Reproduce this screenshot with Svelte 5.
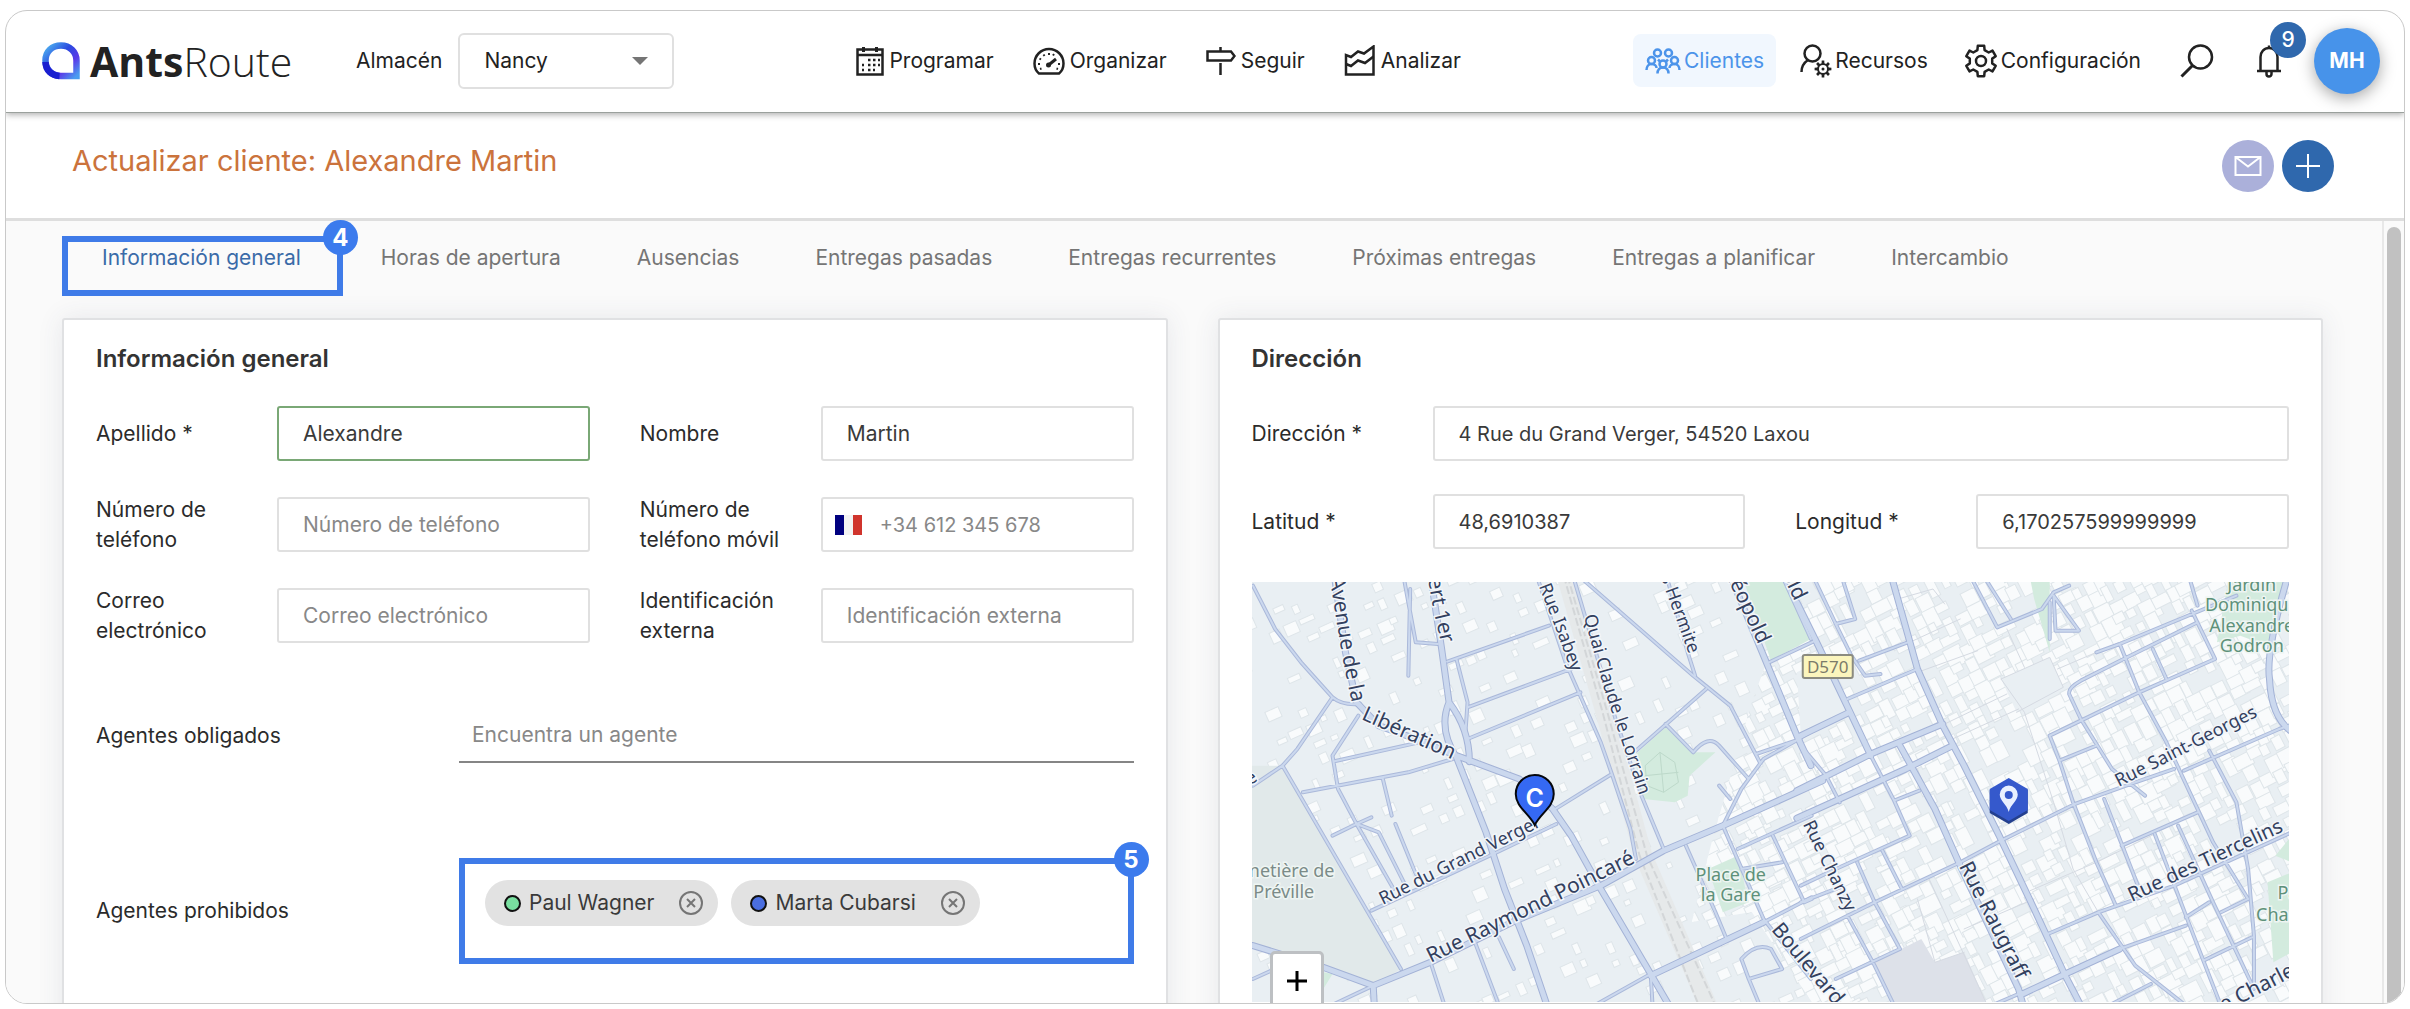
<script>
  const mainNav = [
    { label: 'Programar', icon: 'calendar' },
    { label: 'Organizar', icon: 'gauge' },
    { label: 'Seguir', icon: 'sign' },
    { label: 'Analizar', icon: 'chart' }
  ];
  const sideNav = [
    { label: 'Clientes', icon: 'people', active: true },
    { label: 'Recursos', icon: 'usergear' },
    { label: 'Configuración', icon: 'gear' }
  ];
  const tabs = [
    'Información general',
    'Horas de apertura',
    'Ausencias',
    'Entregas pasadas',
    'Entregas recurrentes',
    'Próximas entregas',
    'Entregas a planificar',
    'Intercambio'
  ];
  const agents = [
    { name: 'Paul Wagner', tone: 'green' },
    { name: 'Marta Cubarsi', tone: 'blue' }
  ];

  const gearPath = (teeth, outer, inner, c) => {
    const pts = [];
    const step = (Math.PI * 2) / teeth;
    for (let i = 0; i < teeth; i++) {
      const a = i * step - Math.PI / 2;
      for (const [r, o] of [[inner, -0.3], [outer, -0.2], [outer, 0.2], [inner, 0.3]]) {
        pts.push(`${(c + r * Math.cos(a + o * step)).toFixed(1)} ${(c + r * Math.sin(a + o * step)).toFixed(1)}`);
      }
    }
    return 'M' + pts.join('L') + 'Z';
  };

  // Building footprints: sparse suburbs to the west, dense blocks to the east.
  let seed = 7;
  const rnd = () => {
    seed = (seed * 16807) % 2147483647;
    return seed / 2147483647;
  };
  const houses = [];
  for (let u = -40; u < 620; u += 17) {
    for (let v = -60; v < 640; v += 17) {
      if (rnd() > 0.38) continue;
      const x = u + rnd() * 8;
      const y = v + rnd() * 8;
      if (x > 540 + y * 0.1) continue;
      houses.push({ x, y, w: 5 + rnd() * 11, h: 5 + rnd() * 8 });
    }
  }
  const blocks = [];
  for (let u = -20; u < 1100; u += 14) {
    for (let v = 0; v < 1000; v += 15) {
      if (rnd() > 0.85) continue;
      blocks.push({ x: u + rnd() * 5, y: v + rnd() * 5, w: 7 + rnd() * 14, h: 8 + rnd() * 13 });
    }
  }

  const westMajor = [
    'M280 20L310 250L340 400L400 470L500 510L610 560L780 630L870 720L920 800L1000 960L1135 1215L1185 1310',
    'M540 20L570 240L590 400Q560 480 610 565',
    'M590 400Q645 480 645 578',
    'M610 565L690 790L740 960L800 1130L855 1310',
    'M60 1130L250 1195L385 1250L540 1180L760 1060L1000 950L1170 845L1330 770L1600 635',
    'M385 1250L388 1310',
    'M1350 20L1440 260L1530 500L1568 590',
    'M1135 1220L1440 1060'
  ];
  const westMinor = [
    'M60 50L120 180L190 280L275 385Q300 410 350 405', 'M275 385L180 540L140 590L60 650',
    'M345 440L275 560L290 660L340 765L440 960', 'M140 590L460 1200', 'M280 577L530 515',
    'M195 670L480 610L600 570', 'M410 625L435 740', 'M340 765L400 790L470 945', 'M445 765L500 915',
    'M275 800L340 765L380 745', 'M585 278L860 170', 'M610 270L640 400L635 480', 'M640 415L920 300',
    'M640 510L945 370', 'M830 30L905 280L1000 520L1030 615L1080 780L1095 870', 'M925 20L1040 450L1110 680L1170 840',
    'M940 20L1250 320L1350 410L1430 580', 'M1180 30L1235 250L1255 320', 'M1285 360L1095 545',
    'M1175 465L1250 550Q1290 495 1320 530L1400 630', 'M1490 20L1568 210', 'M1455 280L1580 215',
    'M1330 770L1380 660L1440 570L1520 520L1580 480', 'M1330 770L1440 1050L1568 1230', 'M1230 830L1310 1030L1340 1110',
    'M1135 1215L990 1305', 'M1135 1215L1140 1310', 'M1135 1215L1180 1310', 'M660 1120L725 1310', 'M540 1180L578 1310',
    'M725 1105L765 1200', 'M1370 840L1570 740', 'M1420 555L1540 510', 'M1465 800L1550 1000L1570 990',
    'M380 1025L700 860L880 765', 'M870 725L1030 615', 'M385 1250L280 1305', 'M1440 1060L1570 985',
    'M1380 1170Q1420 1120 1460 1140L1490 1200L1400 1230Z', 'M1320 650L1350 690', 'M60 1230L110 1205',
    'M1380 900L1490 880', 'M470 40L500 220L560 225', 'M485 60L480 320', 'M1400 1230L1430 1310'
  ];
  const eastMajor = [
    'M-10 100L45 230L125 425L180 560', 'M235 30L300 300L365 470L420 590L510 800L600 1020L680 1220L720 1310',
    'M255 530L345 720L410 890L560 1260L572 1310', 'M-10 665L180 555L365 465', 'M-10 748L100 690L270 600L390 530',
    'M1250 30Q1195 250 1205 330Q1210 450 1265 490', 'M0 500L125 430', 'M570 1275L680 1215L820 1140'
  ];
  const eastMinor = [
    'M0 530L65 620L100 700', 'M0 1110L190 1000L410 880L515 815L705 705L860 640L960 600', 'M985 605L1230 480L1260 468',
    'M765 1030L960 950L1130 860L1262 790', 'M635 1095L765 1030L860 1190L990 1310', 'M820 1140L990 1070',
    'M120 390L300 300', 'M150 275L275 220', 'M35 30L90 165L130 260L165 320L205 315', 'M90 165L140 150L110 40',
    'M440 30L505 175', 'M475 30L540 150', 'M505 175L620 120L650 70L690 50', 'M650 80L715 185L655 185Z', 'M760 250L820 225L1120 80', 'M1000 30L1020 110',
    'M820 225L870 370L940 520L1060 820L1150 990', 'M690 370Q690 355 720 335L830 270L1020 160', 'M690 375L720 450L800 600L885 680',
    'M720 455L870 370L1065 270L1005 125', 'M1050 545L1120 700L1150 900L1165 1100L1165 1260', 'M640 500L665 575L700 700L760 880L810 1010',
    'M640 500L720 455', 'M665 575L760 530', 'M780 690L870 960', 'M825 830L1020 730', 'M910 795L1010 1100L1080 1310',
    'M970 770L1060 1000L1165 1260', 'M1080 1030L1150 990', 'M1035 1175L1160 1105', 'M905 240L940 330', 'M990 1045L1050 1000',
    'M180 560L240 695L280 800', 'M240 695L305 665', 'M280 800L90 900L0 950', 'M210 845L260 960', 'M145 880L190 1000L255 1140',
    'M120 1040L190 1190L240 1310', 'M255 1140L90 1230', 'M0 1000L100 955', 'M800 1305L900 1245', 'M490 1310L570 1270', 'M640 210L640 100'
  ];
  const lanes = [
    'M250 90L340 60L370 105', 'M280 220L410 150', 'M300 310L455 245', 'M515 330L575 430L650 700L700 900L765 1030',
    'M515 330L640 265L675 355L555 430', 'M530 180L575 295', 'M370 465L530 375', 'M390 510L560 420', 'M590 965L760 880L910 795',
    'M300 990L345 1180L420 1150', 'M420 1080L600 990', 'M330 690L300 600', 'M660 300L830 215', 'M330 930L480 1310'
  ];
</script>

{#snippet icon(name)}
  {#if name === 'calendar'}
    <svg class="ico" viewBox="0 0 28 30" width="28" height="30" aria-hidden="true">
      <path d="M1.5 3.5h25v25h-25zM1.5 9h25" /><path d="M7.500 1v5M20.500 1v5" stroke-width="3" />
      <path d="M12 14h2.500M17 14h2.500M22 14h2M6 19h2M12 19h2.500M17 19h2.500M22 19h2M6 24h2M12 24h2.500M17 24h2" stroke-width="2.500" />
    </svg>
  {:else if name === 'gauge'}
    <svg class="ico" viewBox="0 0 32 28" width="32" height="28" aria-hidden="true">
      <path d="M6 26.500C3 24 1.500 20 1.500 16.500a14.500 14.500 0 0 1 29 0c0 3.500-1.500 7.500-4.500 10z" />
      <path d="M15 18.500l8-6.500" stroke-width="3" /><circle cx="15.500" cy="18" r="2.500" fill="currentColor" stroke="none" />
      <path d="M5 17h2M6.500 11.500l1.500 1M10.500 7.500l1 1.500M16 6v2M21 7l-1 1.500M25 17h2M7 22l1.500-.500M25 22l-1.500-.500" stroke-width="2" />
    </svg>
  {:else if name === 'sign'}
    <svg class="ico" viewBox="0 0 30 30" width="30" height="30" aria-hidden="true">
      <path d="M1.500 5.500h23.500l3.500 4.500-3.500 4.500h-23.500z" /><path d="M14.500 1v4M14.500 17v12" />
    </svg>
  {:else if name === 'chart'}
    <svg class="ico" viewBox="0 0 32 32" width="32" height="32" aria-hidden="true">
      <path d="M2 29.500v-19.500l5 2 7-5.500 6 2 9.500-7v28z" /><path d="M2 19l5 2 7-5.500 7 2.500 8.500-6.500" />
    </svg>
  {:else if name === 'people'}
    <svg class="ico" viewBox="0 0 36 26" width="36" height="26" aria-hidden="true">
      <circle cx="12.500" cy="5" r="3.500" /><circle cx="23.500" cy="5" r="3.500" />
      <circle cx="6.500" cy="12.500" r="3.500" /><circle cx="29.500" cy="12.500" r="3.500" /><circle cx="18" cy="16" r="3.500" />
      <path d="M1.500 22c0-3.500 2-6 5-6s5 2 5 4M34.500 22c0-3.500-2-6-5-6s-5 2-5 4M12.500 25.500c0-3.500 2-6 5.500-6s5.500 2.500 5.500 6M13 11.500l2 2M23 11.500l-2 2" />
    </svg>
  {:else if name === 'usergear'}
    <svg class="ico" viewBox="0 0 32 34" width="32" height="34" aria-hidden="true">
      <circle cx="12.500" cy="9.500" r="8" /><path d="M1.500 28c0-5 2-9 6.500-12" />
      <g transform="translate(14 16)"><path d={gearPath(8, 8.5, 6, 9)} fill="currentColor" stroke="none" /><circle cx="9" cy="9" r="4" fill="#fff" stroke="none" /><circle cx="9" cy="9" r="1.500" fill="currentColor" stroke="none" /></g>
    </svg>
  {:else if name === 'gear'}
    <svg class="ico" viewBox="0 0 34 34" width="34" height="34" aria-hidden="true">
      <path d={gearPath(6, 15.5, 11.5, 17)} stroke-linejoin="round" /><circle cx="17" cy="17" r="5" />
    </svg>
  {/if}
{/snippet}

{#snippet field(id, label, value, placeholder, kind)}
  <div class="field">
    <label for={id}>{label}</label>
    <input {id} type="text" class={kind} {value} {placeholder} />
  </div>
{/snippet}

<div class="frame">
  <header class="top">
    <a class="logo" href="#inicio" aria-label="AntsRoute">
      <svg viewBox="0 0 38 38" width="38" height="38" aria-hidden="true">
        <defs>
          <linearGradient id="ring" x1="0" y1="0" x2="1" y2="1">
            <stop offset="0" stop-color="#4fb4f0" /><stop offset=".4" stop-color="#2a4be0" />
            <stop offset=".7" stop-color="#5a3ae8" /><stop offset="1" stop-color="#4a9cf0" />
          </linearGradient>
        </defs>
        <path d="M19 3.500c9 0 15.500 6.500 15.500 15v15.500h-15.500c-9 0-15.500-6.500-15.500-15.500s6.500-15 15.500-15z" fill="none" stroke="url(#ring)" stroke-width="6.500" />
        <path d="M3.500 20c0 8 6 13.500 14 14" fill="none" stroke="#1a1fd0" stroke-width="6.500" />
      </svg>
      <span class="word"><b>Ants</b>Route</span>
    </a>
    <div class="depot">
      <label for="depot">Almacén</label>
      <span class="pick"><select id="depot"><option>Nancy</option></select></span>
    </div>
    <nav class="main">
      {#each mainNav as item}
        <a href="#{item.icon}">{@render icon(item.icon)}<span>{item.label}</span></a>
      {/each}
    </nav>
    <nav class="side">
      {#each sideNav as item}
        <a href="#{item.icon}" class:active={item.active}>{@render icon(item.icon)}<span>{item.label}</span></a>
      {/each}
    </nav>
    <div class="tools">
      <button class="plain" aria-label="Buscar">
        <svg class="ico" viewBox="0 0 34 34" width="34" height="34"><circle cx="20.500" cy="13" r="11.500" /><path d="M12.500 21.500l-11 11" stroke-width="3" /></svg>
      </button>
      <button class="plain bell" aria-label="Notificaciones">
        <svg class="ico" viewBox="0 0 26 34" width="26" height="34"><path d="M1 27h24M4.500 27v-14c0-5 3.500-9 8.500-9s8.500 4 8.500 9v14M13 1.500v3M10.500 28v2a2.500 2.500 0 0 0 5 0v-2" /></svg>
        <span class="count">9</span>
      </button>
      <button class="avatar">MH</button>
    </div>
  </header>

  <div class="titlebar">
    <h1>Actualizar cliente: Alexandre Martin</h1>
    <div class="actions">
      <button class="mail" aria-label="Enviar correo">
        <svg viewBox="0 0 28 22" width="28" height="22"><path d="M1.500 2h25v18h-25zM1.500 2l12.500 9.500 12.500-9.500" /></svg>
      </button>
      <button class="add" aria-label="Añadir">
        <svg viewBox="0 0 24 24" width="24" height="24"><path d="M12 0v24M0 12h24" /></svg>
      </button>
    </div>
  </div>

  <div class="body">
    <main>
      <nav class="tabs">
        {#each tabs as tab, i}
          <a href="#tab{i}" class:current={i === 0}>{tab}{#if i === 0}<span class="step">4</span>{/if}</a>
        {/each}
      </nav>

      <div class="cards">
        <section class="card">
          <h2>Información general</h2>
          <div class="fields">
            {@render field('apellido', 'Apellido *', 'Alexandre', '', 'valid')}
            {@render field('nombre', 'Nombre', 'Martin', '', '')}
            {@render field('telefono', 'Número de teléfono', '', 'Número de teléfono', '')}
            <div class="field">
              <label for="movil">Número de teléfono móvil</label>
              <div class="phone">
                <span class="flag"></span>
                <input id="movil" class="digits" type="tel" placeholder="+34 612 345 678" />
              </div>
            </div>
            {@render field('correo', 'Correo electrónico', '', 'Correo electrónico', '')}
            {@render field('externa', 'Identificación externa', '', 'Identificación externa', '')}
          </div>
          <div class="agents required">
            <label for="agente">Agentes obligados</label>
            <input id="agente" type="text" placeholder="Encuentra un agente" />
          </div>
          <div class="agents">
            <span>Agentes prohibidos</span>
            <div class="chips">
              {#each agents as agent}
                <span class="chip">
                  <i class="dot {agent.tone}"></i>{agent.name}
                  <button aria-label="Quitar {agent.name}">
                    <svg viewBox="0 0 24 24" width="24" height="24"><circle cx="12" cy="12" r="11" /><path d="M8 8l8 8M16 8l-8 8" /></svg>
                  </button>
                </span>
              {/each}
              <span class="step">5</span>
            </div>
          </div>
        </section>

        <section class="card">
          <h2>Dirección</h2>
          <div class="fields tight">
            <div class="wide">{@render field('direccion', 'Dirección *', '4 Rue du Grand Verger, 54520 Laxou', '', 'digits')}</div>
            {@render field('latitud', 'Latitud *', '48,6910387', '', 'digits')}
            {@render field('longitud', 'Longitud *', '6,170257599999999', '', 'digits')}
          </div>
          <div class="map">
            <svg class="tiles" viewBox="0 0 1038 420" preserveAspectRatio="xMidYMin slice" role="img" aria-label="Mapa">
              <defs>
                <path id="p-avenue" d="M78 -4L90 72L106 150" />
                <path id="p-albert" d="M174 -16L182 30L196 90" />
                <path id="p-isabey" d="M287 4L306 52L330 120" />
                <path id="p-quai" d="M332 34L352 106L400 250" />
                <path id="p-verger" d="M131 323L290 244L330 224" />
                <path id="p-poincare" d="M179 381L300 322L430 258" />
              </defs>
              <rect width="1038" height="420" class="land" />
              <g class="houses" transform="rotate(-24 270 210)">
                {#each houses as b}<rect x={b.x} y={b.y} width={b.w} height={b.h} />{/each}
              </g>
              <clipPath id="east"><path d="M500 120L545 0H1038V420H560L500 330L440 340L460 260Z" /></clipPath>
              <g clip-path="url(#east)">
                <g class="houses" transform="rotate(-27)">
                  {#each blocks as b}<rect x={b.x} y={b.y} width={b.w} height={b.h} />{/each}
                </g>
              </g>
              <g transform="translate(-21 -13) scale(.37 .3333)">
                <path class="yard" d="M57 590H140L460 1200L385 1250L57 1130Z" />
                <path class="park" d="M1175 475L1250 550L1310 550L1240 620L1235 680L1200 700L1115 690L1090 560ZM1385 30H1495L1568 210L1460 275ZM1290 900L1370 860L1400 1000L1330 1030ZM250 1210L275 1215L250 1260Z" />
                <path class="path" d="M1120 590L1160 550L1200 580L1210 640L1170 670L1125 650ZM1160 550L1170 670M1120 620L1210 610" />
                <path class="rail" d="M905 20L1010 430L1115 860L1290 1310" />
                <path class="track" d="M900 20L1005 430L1105 860L1265 1310M910 20L1018 430L1125 860L1310 1310" />
              </g>
              <g transform="translate(549 -13) scale(.389 .3333)">
                <path class="park" d="M590 30H640V250L600 90ZM1100 30H1250L1200 230L1130 200L1070 220ZM1200 940L1262 910V1150L1215 1180ZM1220 860L1262 800V880Z" />
                <path class="lot" d="M190 1180L310 1110L345 1180L420 1150L480 1310H235Z" />
                <path class="square" d="M515 330L640 265L675 355L555 430ZM-10 310L60 270L125 425L0 500Z" />
              </g>
              {#each ['casing', 'fill'] as layer}
                <g class="roads {layer}">
                  <g transform="translate(-21 -13) scale(.37 .3333)">
                    <path class="minor" d={westMinor.join('')} /><path class="major" d={westMajor.join('')} />
                  </g>
                  <g transform="translate(549 -13) scale(.389 .3333)">
                    {#if layer === 'casing'}<path class="lane" d={lanes.join('')} />{/if}
                    <path class="minor" d={eastMinor.join('')} /><path class="major" d={eastMajor.join('')} />
                  </g>
                </g>
              {/each}
              <g class="names">
                <text class="big"><textPath href="#p-avenue">Avenue de la</textPath></text>
                <text class="big" transform="translate(109 137) rotate(24)">Libération</text>
                <text class="big"><textPath href="#p-albert">bert 1er</textPath></text>
                <text><textPath href="#p-isabey">Rue Isabey</textPath></text>
                <text><textPath href="#p-quai">Quai Claude le Lorrain</textPath></text>
                <text><textPath href="#p-verger">Rue du Grand Verger</textPath></text>
                <text class="big"><textPath href="#p-poincare">Rue Raymond Poincaré</textPath></text>
                <text transform="translate(409 -5) rotate(70)">s Hermite</text>
                <text class="big" transform="translate(473 -9) rotate(65)">Léopold</text>
                <text class="big" transform="translate(524 -20) rotate(64)">pold</text>
                <text transform="translate(551 242) rotate(64)">Rue Chanzy</text>
                <text class="big" transform="translate(707 284) rotate(63)">Rue Raugraff</text>
                <text class="big" transform="translate(519 348) rotate(50)">Boulevard L</text>
                <text transform="translate(867 205) rotate(-27)">Rue Saint-Georges</text>
                <text class="mid" transform="translate(880 320) rotate(-25)">Rue des Tiercelins</text>
                <text class="big" transform="translate(972 430) rotate(-27)">e Charles</text>
                <text transform="translate(-6 206) rotate(-32)">le</text>
              </g>
              <g class="places">
                <text x="1000" y="9">Jardin</text><text x="1000" y="29">Dominique</text>
                <text x="1000" y="50">Alexandre</text><text x="1000" y="70">Godron</text>
                <text x="479" y="299">Place de</text><text x="479" y="319">la Gare</text>
                <text x="1044" y="317">Parc</text><text x="1036" y="339">Charles</text>
                <text class="grey" x="37" y="295">metière de</text><text class="grey" x="32" y="316">Préville</text>
              </g>
              <g class="route"><rect x="551" y="73" width="50" height="23" rx="2" /><text x="576" y="91">D570</text></g>
              <g class="pin">
                <path d="M283 243C277 231 264 225 264 212A19 19 0 0 1 302 212C302 225 289 231 283 243Z" />
                <text x="283" y="225">C</text>
              </g>
              <path class="hexshade" d="M757 197L776 208V231L757 242L738 231V208Z" />
              <path class="hex" d="M757 196L776 207V228L757 239L738 228V207Z" />
              <path class="drop" d="M757 230C755 222 748 219 748 212.500A9 9 0 0 1 766 212.500C766 219 759 222 757 230Z" />
              <circle class="hex" cx="757" cy="213" r="4" />
            </svg>
            <button class="zoom" aria-label="Acercar"><svg viewBox="0 0 20 20" width="20" height="20"><path d="M10 0v20M0 10h20" /></svg></button>
          </div>
        </section>
      </div>
    </main>
    <div class="track-v"><div class="thumb"></div></div>
  </div>
</div>

<style>
  :global(body) { margin: 0; background: #fff; }
  :global(*) { box-sizing: border-box; }
  .frame {
    height: calc(100vh - 15px);
    margin: 10px 5px 5px 5px;
    border: 1px solid #c9c9c9;
    border-radius: 22px;
    overflow: hidden;
    display: flex;
    flex-direction: column;
    background: #fff;
    font-family: Inter, 'Open Sans', sans-serif;
    font-size: 21px;
    line-height: 30px;
    color: #2b2b2b;
  }
  a { color: inherit; text-decoration: none; }
  button, input, select { font: inherit; color: inherit; }
  button { border: 0; padding: 0; background: none; cursor: pointer; }
  svg { display: block; flex: none; }
  .ico { fill: none; stroke: currentColor; stroke-width: 2.5; }

  .top {
    height: 102px;
    flex: none;
    display: flex;
    align-items: center;
    padding: 0 24px 2px 36px;
    border-bottom: 1px solid #9ba19d;
    box-shadow: 0 2px 6px rgba(0, 0, 0, 0.3);
    position: relative;
    z-index: 2;
    color: #222;
  }
  .logo { display: flex; align-items: center; gap: 10px; width: 314px; }
  .word { font-family: 'Open Sans', sans-serif; font-size: 41px; line-height: 44px; font-weight: 300; }
  .word b { font-weight: 700; }
  .depot { display: flex; align-items: center; gap: 16px; }
  .pick { position: relative; }
  .pick::after {
    content: '';
    position: absolute;
    right: 26px;
    top: 24px;
    border: 8px solid transparent;
    border-top-color: #757575;
    border-bottom: 0;
    pointer-events: none;
  }
  select {
    appearance: none;
    width: 216px;
    height: 56px;
    padding: 0 24px;
    border: 2px solid #e0e0e0;
    border-radius: 6px;
    background: #fff;
    display: block;
  }
  .main { display: flex; gap: 39px; margin-left: 182px; }
  .main a { display: flex; align-items: center; gap: 5px; }
  .side { display: flex; gap: 12px; margin-left: auto; }
  .side a { display: flex; align-items: center; gap: 3px; height: 53px; padding: 0 12px; border-radius: 8px; }
  .side a.active { background: #f1f7fe; color: #4c94ea; }
  .tools { display: flex; align-items: center; margin-left: 27px; }
  .plain { display: block; }
  .bell { position: relative; margin: 0 32px 0 42px; }
  .count {
    position: absolute;
    left: 14px;
    top: -22px;
    width: 36px;
    height: 36px;
    line-height: 36px;
    border-radius: 50%;
    background: #2f68ad;
    color: #fff;
    font-weight: 500;
  }
  .avatar {
    width: 66px;
    height: 66px;
    border-radius: 50%;
    background: #4793ea;
    color: #fff;
    font-weight: 700;
    box-shadow: 0 4px 16px rgba(0, 0, 0, 0.35);
  }

  .titlebar {
    height: 108px;
    flex: none;
    display: flex;
    align-items: center;
    justify-content: space-between;
    padding: 0 70px 0 66px;
    border-bottom: 3px solid #dedede;
  }
  h1 { margin: 0 0 10px; font-size: 29px; line-height: 36px; font-weight: 400; color: #cb733c; }
  .actions { display: flex; gap: 8px; }
  .actions button { width: 52px; height: 52px; border-radius: 50%; display: grid; place-items: center; }
  .actions svg { fill: none; stroke: #fff; stroke-width: 2; }
  .mail { background: #abb0da; }
  .add { background: #2f68ad; }

  .body { flex: 1; min-height: 0; display: flex; background: #fafafa; }
  main { flex: 1; min-width: 0; padding: 15px 59px 0 56px; }
  .track-v { width: 22px; border-left: 2px solid #e8e8e8; padding: 6px 3px 0; }
  .thumb { width: 14px; height: 100%; border-radius: 7px 7px 0 0; background: #c1c1c1; }

  .tabs { display: flex; color: #757575; }
  .tabs a { height: 60px; padding: 7px 38px; white-space: nowrap; }
  .tabs a.current {
    position: relative;
    color: #3a6ba8;
    padding: 1px 36px 1px 34px;
    border: 6px solid #3f7be8;
  }
  .step {
    position: absolute;
    top: -22px;
    right: -21px;
    width: 35px;
    height: 35px;
    border-radius: 50%;
    background: #3c7bed;
    color: #fff;
    font-weight: 700;
    font-size: 24px;
    line-height: 35px;
    text-align: center;
  }

  .cards { display: grid; grid-template-columns: 1fr 1fr; gap: 50px; margin-top: 22px; }
  .card {
    height: 760px;
    padding: 24px 32px;
    background: #fff;
    border: 2px solid #e0e1e3;
    border-radius: 3px;
    box-shadow: 0 0 26px rgba(60, 70, 100, 0.1);
  }
  h2 { margin: 0; font-size: 24px; line-height: 30px; font-weight: 600; color: #333; }
  .fields { display: grid; grid-template-columns: 1fr 1fr; gap: 36px 50px; margin-top: 32px; }
  .tight { gap: 33px 50px; }
  .wide { grid-column: 1 / 3; }
  .field { display: grid; grid-template-columns: 181px 1fr; grid-template-rows: 55px; align-items: center; height: 55px; }
  .field label { padding-right: 24px; }
  .field input {
    width: 100%;
    min-width: 0;
    height: 55px;
    padding: 0 24px;
    border: 2px solid #e0e0e0;
    border-radius: 3px;
    background: #fff;
    color: #3a3a3a;
  }
  .field input.valid { border-color: #7aa876; }
  .field input.digits { font-size: 20px; }
  input::placeholder { color: #888; opacity: 1; }
  input { outline: none; }
  .phone { display: flex; align-items: center; height: 55px; border: 2px solid #e0e0e0; border-radius: 3px; padding-left: 12px; }
  .field .phone input { border: 0; height: 51px; padding: 0 18px; }
  .flag { flex: none; width: 27px; height: 20px; background: linear-gradient(90deg, #00007f 34%, #f3f3f3 34% 66%, #d0342c 66%); }
  .agents { display: grid; grid-template-columns: 363px 1fr; align-items: center; }
  .required { margin: 65px 0 95px; }
  .agents input { height: 55px; padding: 0 13px; border: 0; border-bottom: 2px solid #858585; background: none; }
  .chips {
    position: relative;
    display: flex;
    gap: 13px;
    height: 106px;
    padding: 16px 20px;
    border: 6px solid #3f7be8;
  }
  .chip { display: flex; align-items: center; height: 46px; padding: 0 15px 0 19px; border-radius: 23px; background: #e2e2e2; color: #3a3a3a; white-space: nowrap; }
  .chip button { margin-left: 25px; }
  .chip svg { fill: none; stroke: #757575; stroke-width: 2; }
  .dot { width: 17px; height: 17px; border: 2px solid #111; border-radius: 50%; margin-right: 8px; }
  .green { background: #79dfa0; }
  .blue { background: #4a6ee0; }

  .map { position: relative; height: 470px; margin-top: 33px; overflow: hidden; }
  .tiles { width: 100%; height: 420px; }
  .zoom {
    position: absolute;
    left: 18px;
    top: 369px;
    width: 54px;
    height: 60px;
    border: 3px solid #bdc0c3;
    border-radius: 5px;
    background: #fff;
    display: grid;
    place-items: center;
  }
  .zoom path { stroke: #000; stroke-width: 3; }
  .land { fill: #e9eff3; }
  .houses rect { fill: #f9fbfc; stroke: #dee5e9; stroke-width: 1; }
  .yard { fill: #e1e9ea; }
  .park { fill: #d3ebde; }
  .path { fill: none; stroke: #bdd9ca; vector-effect: non-scaling-stroke; }
  .lot { fill: #dde1e9; }
  .square { fill: #e9eff3; }
  .rail { fill: none; stroke: #e6e9ea; stroke-width: 18; vector-effect: non-scaling-stroke; }
  .track { fill: none; stroke: #d3d6d8; stroke-width: 2; stroke-dasharray: 8 3; vector-effect: non-scaling-stroke; }
  .roads path { fill: none; stroke-linejoin: round; stroke-linecap: round; vector-effect: non-scaling-stroke; }
  .casing path { stroke: #a3b2d6; }
  .casing .major { stroke-width: 7; }
  .casing .minor { stroke-width: 4; stroke: #abb9da; }
  .casing .lane { stroke: #d5dae2; stroke-width: 1; }
  .fill path { stroke: #cbd8ee; }
  .fill .major { stroke-width: 5; }
  .fill .minor { stroke-width: 2; }
  .tiles text { font-family: 'Noto Sans', 'Open Sans', sans-serif; }
  .names text { font-size: 18px; fill: #33405e; stroke: #f2f6fa; stroke-width: 3; paint-order: stroke; }
  .names .mid { font-size: 20px; }
  .names .big { font-size: 21px; }
  .places text { font-size: 18px; fill: #5e917a; stroke: #eef5f3; stroke-width: 3; paint-order: stroke; text-anchor: middle; }
  .places .grey { fill: #7b8b88; }
  .route rect { fill: #fbf5bd; stroke: #8b8b80; stroke-width: 2; }
  .route text { font-size: 17px; fill: #7b7b6a; text-anchor: middle; }
  .pin path { fill: #3569f3; stroke: #05070d; stroke-width: 2; }
  .tiles .pin text { font-family: Inter, sans-serif; font-size: 25px; font-weight: 600; fill: #fff; stroke: none; text-anchor: middle; }
  .hex { fill: #3559cc; }
  .hexshade { fill: #24408f; }
  .drop { fill: #e8f0ff; }
</style>
